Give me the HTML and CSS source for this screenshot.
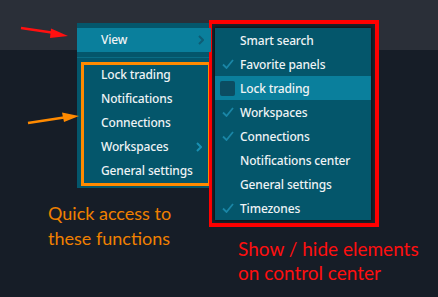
FILE: index.html
```html
<!DOCTYPE html>
<html>
<head>
<meta charset="utf-8">
<link rel="stylesheet" href="styles.css">
</head>
<body>
<div class="stage">
  <div class="col-left">
    <div class="menu menu-main">
      <div class="item item-view">View<svg class="chev" width="6" height="10" viewBox="0 0 6 10"><path d="M1 1 L5 5 L1 9" fill="none" stroke="currentColor" stroke-width="2"/></svg></div>
      <div class="sep"></div>
      <div class="quick">
        <div class="item">Lock trading</div>
        <div class="item">Notifications</div>
        <div class="item">Connections</div>
        <div class="item">Workspaces<svg class="chev chev-light" width="6" height="10" viewBox="0 0 6 10"><path d="M1 1 L5 5 L1 9" fill="none" stroke="currentColor" stroke-width="2"/></svg></div>
        <div class="item last">General settings</div>
      </div>
    </div>
    <p class="note note-orange">Quick access to<br>these functions</p>
  </div>
  <div class="col-right">
    <div class="redbox">
      <div class="menu menu-sub">
        <div class="row"><span class="mark"></span>Smart search</div>
        <div class="row"><span class="mark"><svg width="12" height="10" viewBox="0 0 12 10"><path d="M1 5.5 L4.5 9 L11 1" fill="none" stroke="currentColor" stroke-width="1.8"/></svg></span>Favorite panels</div>
        <div class="row active"><span class="mark"><span class="box"></span></span>Lock trading</div>
        <div class="row"><span class="mark"><svg width="12" height="10" viewBox="0 0 12 10"><path d="M1 5.5 L4.5 9 L11 1" fill="none" stroke="currentColor" stroke-width="1.8"/></svg></span>Workspaces</div>
        <div class="row"><span class="mark"><svg width="12" height="10" viewBox="0 0 12 10"><path d="M1 5.5 L4.5 9 L11 1" fill="none" stroke="currentColor" stroke-width="1.8"/></svg></span>Connections</div>
        <div class="row"><span class="mark"></span>Notifications center</div>
        <div class="row"><span class="mark"></span>General settings</div>
        <div class="row"><span class="mark"><svg width="12" height="10" viewBox="0 0 12 10"><path d="M1 5.5 L4.5 9 L11 1" fill="none" stroke="currentColor" stroke-width="1.8"/></svg></span>Timezones</div>
      </div>
    </div>
    <p class="note note-red">Show / hide elements<br>on control center</p>
  </div>
  <svg class="arrows" width="438" height="297" viewBox="0 0 438 297">
    <path d="M21 28 L55 33" stroke="#ff1010" stroke-width="2.6" fill="none"/>
    <path d="M51 28.5 L68 36 L50 38 Z" fill="#ff1010"/>
    <path d="M28 123 L64 117.5" stroke="#ff8a00" stroke-width="2.6" fill="none"/>
    <path d="M62 112.5 L79 116 L64 122 Z" fill="#ff8a00"/>
  </svg>
</div>
</body>
</html>
```
FILE: styles.css
```css
html, body {
  margin: 0;
  padding: 0;
}
body {
  width: 438px;
  height: 297px;
  overflow: hidden;
  background: linear-gradient(#2a2f38 0, #2a2f38 50px, #161d27 50px);
  font-family: "Noto Sans", "Open Sans", sans-serif;
}
.stage {
  position: relative;
  display: flex;
  align-items: flex-start;
  width: 438px;
  height: 297px;
  padding-left: 48px;
  box-sizing: border-box;
}
.col-left {
  display: flex;
  flex-direction: column;
  padding-top: 23px;
}
.menu {
  background: #04566b;
  color: #eef3f5;
  font-size: 12px;
  font-weight: 500;
  letter-spacing: -0.15px;
}
.menu-main {
  margin-left: 29px;
  width: 134px;
  padding: 5px 0 2px;
  box-sizing: border-box;
}
.item {
  position: relative;
  height: 20px;
  line-height: 20px;
  padding: 0 0 4px 17px;
  white-space: nowrap;
}
.item.last {
  padding-bottom: 2px;
}
.item-view {
  background: #0a7f9c;
  height: 24px;
  line-height: 24px;
  padding: 0 0 0 24px;
}
.chev {
  position: absolute;
  right: 7px;
  top: 7px;
  color: #0d5d75;
}
.chev-light {
  color: #1a90b2;
  right: 6px;
  top: 5px;
}
.sep {
  margin-top: 5px;
  height: 1px;
  background: #0a6c84;
  margin-bottom: 4px;
}
.quick {
  margin-left: 4px;
  border: 3px solid #ff8a00;
}
.note {
  margin: 0;
  font-family: "Lato", "Open Sans", sans-serif;
  font-size: 18px;
  line-height: 25px;
}
.note-orange {
  color: #f08000;
  margin-top: 13px;
}
.col-right {
  display: flex;
  flex-direction: column;
  padding-top: 20px;
  margin-left: -2px;
}
.redbox {
  border: 4px solid #ff0000;
  border-left-width: 3px;
  padding: 4px 4px 3px 3px;
  background: #1c232d;
  width: 156px;
}
.menu-sub {
  box-shadow: 0 0 3px 1px rgba(0, 0, 0, 0.55);
}
.row {
  display: flex;
  align-items: center;
  height: 24px;
  white-space: nowrap;
}
.row.active {
  background: #0a7f9c;
}
.mark {
  width: 24px;
  display: flex;
  justify-content: center;
  align-items: center;
  color: #1a86a6;
  padding-left: 1px;
}
.box {
  width: 15px;
  height: 15px;
  border-radius: 2px;
  background: #0b4d62;
  margin-left: -2px;
}
.note-red {
  color: #ff0f0f;
  margin-top: 10px;
  margin-left: 29px;
  font-size: 19px;
  line-height: 24px;
}
.arrows {
  position: absolute;
  left: 0;
  top: 0;
  pointer-events: none;
}
```
